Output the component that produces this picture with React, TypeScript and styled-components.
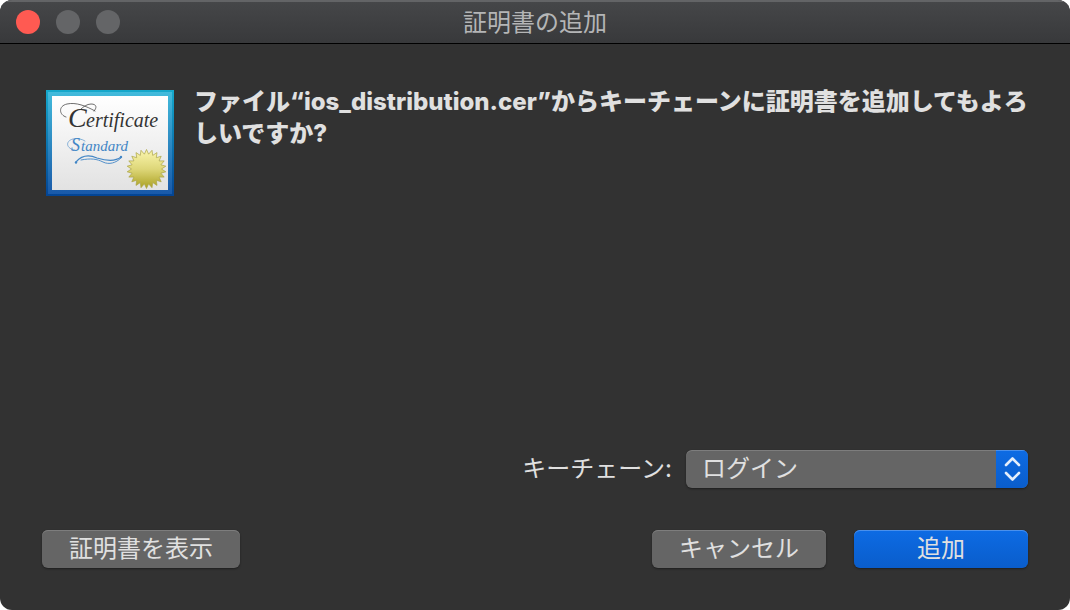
import React from "react";
import styled, { createGlobalStyle } from "styled-components";

const GlobalStyle = createGlobalStyle`
  *, *::before, *::after { box-sizing: border-box; }
  body {
    margin: 0;
    background: #ffffff;
    color: #e0e0e0;
    font-family: Inter, "Noto Sans CJK JP", sans-serif;
    font-size: 24px;
    line-height: 32px;
  }
  button, select { font: inherit; color: inherit; }
`;

const Window = styled.div`
  display: flex;
  flex-direction: column;
  min-height: 100vh;
  overflow: hidden;
  border-radius: 12px;
  background: #323232;
`;

const TitleBar = styled.header`
  display: grid;
  grid-template-columns: 1fr auto 1fr;
  align-items: center;
  height: 44px;
  padding: 0 16px;
  border-bottom: 1px solid #000000;
  background: linear-gradient(#464749, #38393b);
  box-shadow: inset 0 2px 0 #636466;
`;

const TrafficLights = styled.div`
  display: flex;
  gap: 16px;
`;

const Light = styled.button<{ $color: string }>`
  width: 24px;
  height: 24px;
  padding: 0;
  border: 0;
  border-radius: 50%;
  background: ${({ $color }) => $color};
`;

const Title = styled.h1`
  margin: 0;
  padding-top: 2px;
  color: #b4b5b6;
  font-size: 24px;
  font-weight: 400;
`;

const Content = styled.main`
  display: flex;
  flex: 1;
  flex-direction: column;
  padding: 42px;
`;

const Message = styled.section`
  display: flex;
  flex: 1;
  align-items: flex-start;
  gap: 20px;
  margin-right: -8px;
`;

const CertificateIcon = styled.svg`
  flex: none;
  width: 132px;
  height: 112px;
  margin-top: 2px;
`;

const Question = styled.p`
  flex: 1;
  margin: 0;
  font-weight: 800;
  word-break: break-all;
`;

const Field = styled.div`
  display: flex;
  align-items: center;
  justify-content: flex-end;
  gap: 14px;
  margin-bottom: 42px;
`;

const SelectBox = styled.div`
  position: relative;
  width: 342px;
  height: 38px;
  overflow: hidden;
  border-radius: 6px;
  background: #656565;
  box-shadow: 0 1px 2px #1f1f1f;
`;

const Select = styled.select`
  display: block;
  width: 100%;
  height: 100%;
  padding: 0 40px 0 16px;
  border: 0;
  border-radius: 6px;
  appearance: none;
  background: transparent;
  box-shadow: inset 0 1px 0 #7d7d7d;
`;

const Stepper = styled.span`
  position: absolute;
  top: 0;
  right: 0;
  width: 32px;
  height: 38px;
  background: linear-gradient(#0d6be4, #0a5dcb);
  box-shadow: inset 0 1px 0 #4a90ec;
  pointer-events: none;

  svg { display: block; }
`;

const Actions = styled.footer`
  display: flex;
  gap: 28px;
`;

const Button = styled.button<{ $primary?: boolean; $wide?: boolean }>`
  width: ${({ $wide }) => ($wide ? 198 : 174)}px;
  height: 38px;
  margin-right: ${({ $wide }) => ($wide ? "auto" : 0)};
  padding: 0;
  border: 0;
  border-radius: 6px;
  background: ${({ $primary }) =>
    $primary ? "linear-gradient(#0d6be4, #0a5dcb)" : "#656565"};
  box-shadow: inset 0 1px 0 ${({ $primary }) => ($primary ? "#4a90ec" : "#7d7d7d")},
    0 1px 2px #1f1f1f;
  line-height: 38px;
`;

const sealPoints = Array.from({ length: 44 }, (_, i) => {
  const radius = i % 2 ? 15 : 19.5;
  const angle = (i * Math.PI) / 22 - Math.PI / 2;
  return `${(104.5 + radius * Math.cos(angle)).toFixed(1)},${(81 + radius * Math.sin(angle)).toFixed(1)}`;
}).join(" ");

function Certificate() {
  return (
    <CertificateIcon viewBox="0 0 132 112" role="img" aria-label="Certificate Standard">
      <defs>
        <linearGradient id="frame" x2="0" y2="1">
          <stop stopColor="#16a9cc" />
          <stop offset="1" stopColor="#034494" />
        </linearGradient>
        <linearGradient id="frameInner" x2="0" y2="1">
          <stop stopColor="#42bbdc" />
          <stop offset="1" stopColor="#1959a9" />
        </linearGradient>
        <linearGradient id="paper" x2="0" y2="1">
          <stop stopColor="#ffffff" />
          <stop offset="1" stopColor="#e2e2e2" />
        </linearGradient>
        <linearGradient id="seal" x2="0" y2="1">
          <stop stopColor="#fbf6ae" />
          <stop offset="0.5" stopColor="#ded779" />
          <stop offset="1" stopColor="#aaa021" />
        </linearGradient>
      </defs>
      <rect x="4" y="2" width="128" height="106" fill="url(#frame)" />
      <rect x="6" y="4" width="124" height="102" fill="url(#frameInner)" />
      <rect x="10" y="8" width="116" height="94" fill="url(#paper)" />
      <path
        d="M24 29c-7-2-8-11 1-13c9-2 19 2 28 7M52 23c3-3 3-7-3-7c-4 0-8 3-10 5"
        fill="none"
        stroke="#4a4a4a"
        strokeWidth="0.8"
        strokeLinecap="round"
      />
      <text
        y="39"
        fill="#333333"
        fontFamily="Liberation Serif, serif"
        fontStyle="italic"
      >
        <tspan x="26" fontSize="28">C</tspan>
        <tspan x="44" fontSize="20">ertificate</tspan>
      </text>
      <path
        d="M33 62c-9-1-10-9-2-11c4-1 9 0 12 2"
        fill="none"
        stroke="#4286c6"
        strokeWidth="0.6"
        strokeLinecap="round"
      />
      <text
        y="63"
        fill="#4286c6"
        fontFamily="Liberation Serif, serif"
        fontStyle="italic"
      >
        <tspan x="29" fontSize="18">S</tspan>
        <tspan x="39" fontSize="15">tandard</tspan>
      </text>
      <g fill="none" stroke="#4286c6" strokeLinecap="round">
        <path d="M34 74c6-7 14-7 21-4c10 3 18 4 24-1" strokeWidth="1.2" />
        <path d="M39 72c10-2 16-1 22 2c6 3 13 1 18-4" strokeWidth="0.9" />
      </g>
      <g fill="#4286c6">
        <circle cx="34" cy="74.5" r="1.2" />
        <circle cx="79" cy="69" r="1.2" />
      </g>
      <polygon points={sealPoints} fill="url(#seal)" stroke="#aaa344" strokeWidth="0.7" />
    </CertificateIcon>
  );
}

export default function App() {
  return (
    <>
      <GlobalStyle />
      <Window>
        <TitleBar>
          <TrafficLights>
            <Light $color="#ff5a52" aria-label="閉じる" />
            <Light $color="#646567" aria-label="しまう" disabled />
            <Light $color="#646567" aria-label="拡大" disabled />
          </TrafficLights>
          <Title>証明書の追加</Title>
        </TitleBar>
        <Content>
          <Message>
            <Certificate />
            <Question>
              ファイル“ios_distribution.cer”からキーチェーンに証明書を追加してもよろしいですか?
            </Question>
          </Message>
          <Field>
            <label htmlFor="keychain">キーチェーン:</label>
            <SelectBox>
              <Select id="keychain" defaultValue="login">
                <option value="login">ログイン</option>
              </Select>
              <Stepper>
                <svg
                  width="32"
                  height="38"
                  viewBox="0 0 32 38"
                  fill="none"
                  stroke="#e4eefb"
                  strokeWidth="2.6"
                  strokeLinecap="round"
                  strokeLinejoin="round"
                  aria-hidden="true"
                >
                  <path d="M10 15l6.5-6.5L23 15M10 23l6.5 6.5L23 23" />
                </svg>
              </Stepper>
            </SelectBox>
          </Field>
          <Actions>
            <Button $wide>証明書を表示</Button>
            <Button>キャンセル</Button>
            <Button $primary>追加</Button>
          </Actions>
        </Content>
      </Window>
    </>
  );
}
